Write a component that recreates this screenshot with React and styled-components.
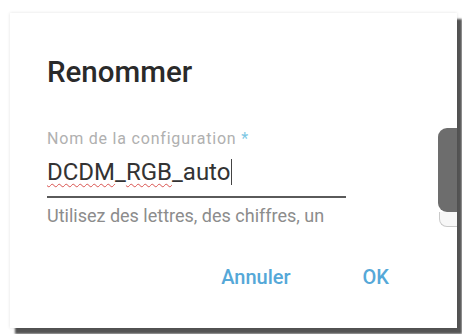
import React from "react";
import styled, { createGlobalStyle } from "styled-components";

const GlobalStyle = createGlobalStyle`
  html, body {
    margin: 0;
    padding: 0;
    background: #ffffff;
    font-family: Roboto, "Liberation Sans", sans-serif;
  }
`;

const Page = styled.div`
  width: 462px;
  height: 334px;
  overflow: hidden;
  padding: 13px 0 0 10px;
  box-sizing: border-box;
`;

const Dialog = styled.div`
  position: relative;
  width: 447px;
  height: 315px;
  box-sizing: border-box;
  background: #ffffff;
  padding: 43px 0 0 37px;
  display: flex;
  flex-direction: column;
  box-shadow: 0 0 3px rgba(0, 0, 0, 0.12), 5px 6px 2px #555555;
`;

const Title = styled.h2`
  margin: 0;
  font-size: 29.5px;
  line-height: 32px;
  font-weight: 500;
  color: #2a2a2a;
`;

const Field = styled.div`
  margin-top: 42px;
  width: 299px;
  display: flex;
  flex-direction: column;
`;

const Label = styled.label`
  font-size: 16px;
  line-height: 18px;
  letter-spacing: 0.8px;
  color: #b0b0b0;
`;

const Required = styled.span`
  color: #7cc7e4;
`;

const Value = styled.div`
  margin-top: 9px;
  padding-bottom: 9px;
  font-size: 24px;
  line-height: 30px;
  color: #333333;
  border-bottom: 2px solid #5a5a5a;
`;

const Misspelled = styled.span`
  text-decoration: underline wavy #d9534f;
  text-decoration-thickness: 1px;
  text-underline-offset: 3px;
`;

const Caret = styled.span`
  display: inline-block;
  width: 1px;
  height: 26px;
  margin-left: 1px;
  vertical-align: -5px;
  background: #444444;
`;

const Helper = styled.div`
  margin-top: 8px;
  font-size: 18px;
  line-height: 20px;
  color: #8c8c8c;
  white-space: nowrap;
`;

const Actions = styled.div`
  margin-top: 39px;
  padding-right: 68px;
  display: flex;
  justify-content: flex-end;
  gap: 72px;
`;

const TextButton = styled.button`
  border: none;
  background: none;
  padding: 0;
  font-family: inherit;
  font-size: 20px;
  line-height: 24px;
  font-weight: 500;
  color: #55a8d8;
  cursor: pointer;
`;

const ScrollThumb = styled.div`
  position: absolute;
  right: 0;
  top: 115px;
  width: 19px;
  height: 84px;
  background: #6d6d6d;
  border-radius: 9px 0 0 9px;
`;

const ScrollEnd = styled.div`
  position: absolute;
  right: 0;
  top: 199px;
  width: 17px;
  height: 14px;
  border: 1px solid #c9c9c9;
  border-right: none;
  border-top: none;
  border-radius: 0 0 0 8px;
  background: #f7f7f7;
`;

export default function App() {
  return (
    <>
      <GlobalStyle />
      <Page>
        <Dialog>
          <Title>Renommer</Title>
          <Field>
            <Label>
              Nom de la configuration <Required>*</Required>
            </Label>
            <Value>
              <Misspelled>DCDM</Misspelled>_<Misspelled>RGB</Misspelled>_auto
              <Caret />
            </Value>
          </Field>
          <Helper>Utilisez des lettres, des chiffres, un</Helper>
          <Actions>
            <TextButton>Annuler</TextButton>
            <TextButton>OK</TextButton>
          </Actions>
          <ScrollThumb />
          <ScrollEnd />
        </Dialog>
      </Page>
    </>
  );
}
